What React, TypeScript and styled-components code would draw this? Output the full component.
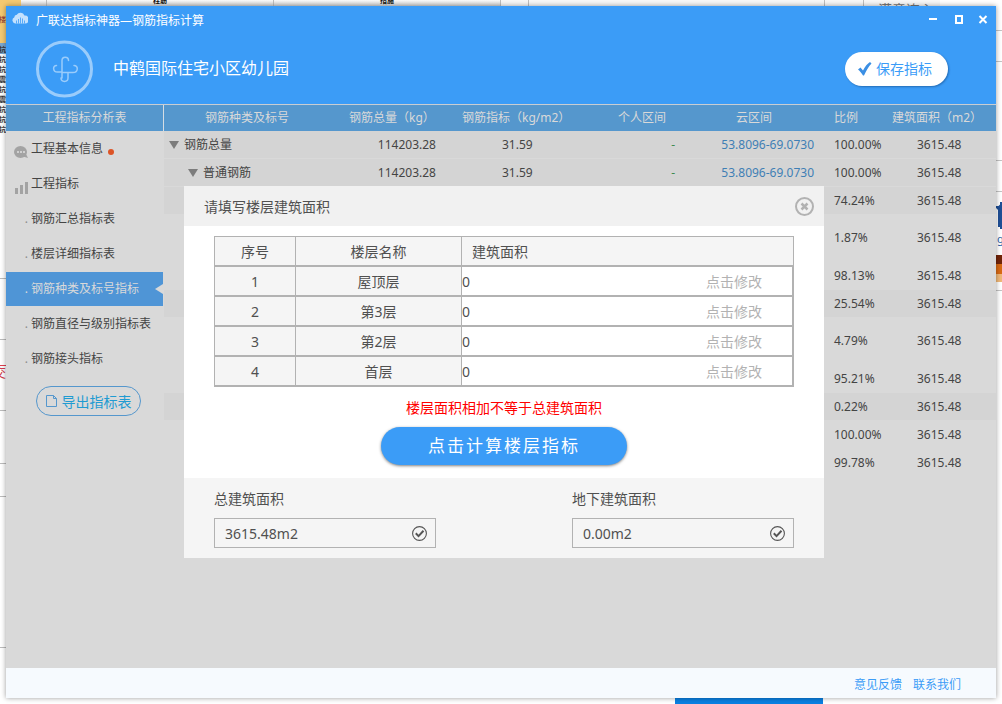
import React from 'react';
import styled, { createGlobalStyle } from 'styled-components';

const GlobalStyle = createGlobalStyle`
  *, *::before, *::after { box-sizing: border-box; }
  html, body { margin: 0; padding: 0; }
  body {
    font-family: "Noto Sans", "Noto Sans CJK SC", sans-serif;
    font-size: 12px;
    line-height: 18px;
    color: #444;
    background: #fff;
  }
  button, input { font: inherit; color: inherit; margin: 0; }
  button { border: 0; padding: 0; background: none; cursor: pointer; }
  a { text-decoration: none; color: inherit; }
`;

/* ---------- desktop behind the window ---------- */

const Desktop = styled.div`
  position: relative;
  min-height: 100vh;
  padding: 6px;
  display: flex;
  overflow: hidden;
`;

const Backdrop = styled.div`
  position: absolute;
  inset: 0;
  overflow: hidden;
`;

const LeftEdge = styled.svg`
  position: absolute;
  top: 0;
  left: 0;
`;

const RightEdge = styled.svg`
  position: absolute;
  top: 0;
  right: 0;
`;

const Taskbar = styled.div`
  position: absolute;
  bottom: 0;
  left: 675px;
  width: 148px;
  height: 6px;
  background: #0a80e2;
`;

/* ---------- window ---------- */

const Window = styled.main`
  position: relative;
  flex: 1;
  min-width: 0;
  display: flex;
  flex-direction: column;
  background: #d9d9d9;
  box-shadow: 0 0 5px rgba(0, 0, 0, 0.4);
`;

const Header = styled.header`
  height: 99px;
  background: #3b9cf7;
  border-bottom: 1px solid #c9cdd2;
  color: #fff;
`;

const TitleBar = styled.div`
  display: flex;
  align-items: center;
  height: 28px;
  padding: 0 7px 0 6px;
  gap: 8px;

  & > svg { margin-bottom: 4px; }
`;

const WindowTitle = styled.span`
  flex: 1;
  padding-top: 2px;
  font-size: 12px;
`;

const WindowButtons = styled.div`
  display: flex;
  gap: 13px;
  align-items: center;
`;

const WindowButton = styled.button`
  display: flex;
  width: 12px;
  height: 12px;
  color: #fff;
`;

const ProjectBar = styled.div`
  display: flex;
  align-items: center;
  height: 58px;
  margin-top: 6px;
  padding: 0 48px 0 30px;
`;

const ProjectName = styled.h1`
  flex: 1;
  margin: 0 0 2px 20px;
  font-size: 16px;
  font-weight: 400;
  line-height: 24px;
`;

const SaveButton = styled.button`
  display: flex;
  align-items: center;
  gap: 4px;
  width: 103px;
  height: 34px;
  padding-left: 13px;
  border-radius: 17px;
  background: #fff;
  color: #3b9cf7;
  font-size: 14px;
  box-shadow: 1px 1px 2px rgba(0, 40, 90, 0.4);
`;

const Content = styled.div`
  flex: 1;
  display: flex;
  align-items: stretch;
`;

const Sidebar = styled.nav`
  width: 158px;
  flex: none;
`;

const SidebarHeading = styled.h2`
  height: 26px;
  margin: 0;
  border-right: 1px solid #d5dde4;
  background: #5597cd;
  color: #d9d9d9;
  font-size: 12px;
  font-weight: 400;
  line-height: 26px;
  text-align: center;
`;

const NavList = styled.ul`
  list-style: none;
  margin: 0 1px 0 0;
  padding: 0;
`;

const NavItem = styled.li`
  margin-top: 1px;
`;

const NavLink = styled.a<{ $active?: boolean }>`
  position: relative;
  display: flex;
  align-items: center;
  height: 34px;
  color: ${(p) => (p.$active ? '#d9d9d9' : '#444')};
  background: ${(p) => (p.$active ? '#4f95d6' : 'transparent')};
`;

const NavMark = styled.span`
  display: flex;
  justify-content: flex-end;
  width: 22px;
  margin-right: 3px;
  color: #8d8d8d;
  ${NavLink}[aria-current] & { color: #d9d9d9; }

  svg { margin-top: 6px; }
`;

const AlertDot = styled.span`
  width: 6px;
  height: 6px;
  margin: 6px 0 0 5px;
  border-radius: 50%;
  background: #dc5427;
`;

const Notch = styled.span`
  position: absolute;
  right: 0;
  border: solid transparent;
  border-width: 5px 8px 5px 0;
  border-right-color: #d9d9d9;
`;

const ExportButton = styled.button`
  display: flex;
  align-items: center;
  justify-content: center;
  gap: 5px;
  width: 105px;
  height: 30px;
  margin: 10px 0 0 30px;
  padding-top: 1px;
  border: 1px solid #5597cd;
  border-radius: 15px;
  color: #1f9bd2;
  font-size: 14px;

  svg { margin-bottom: 2px; }
`;

const Main = styled.section`
  flex: 1;
  min-width: 0;
`;

const IndexTable = styled.table`
  width: 100%;
  table-layout: fixed;
  border-collapse: separate;
  border-spacing: 0;
`;

const HeadCell = styled.th<{ $indent: number }>`
  height: 26px;
  padding: 0 0 0 ${(p) => p.$indent}px;
  background: #5597cd;
  color: #d9d9d9;
  font-weight: 400;
  text-align: left;
  white-space: nowrap;
`;

const Row = styled.tr<{ $tall?: boolean; $shaded?: boolean }>`
  height: ${(p) => (p.$tall ? 47 : 28)}px;
  background: ${(p) => (p.$shaded ? '#d4d4d4' : 'transparent')};
`;

const Cell = styled.td<{ $indent?: number; $right?: number; $color?: string }>`
  padding: 0 ${(p) => p.$right ?? 0}px 0 ${(p) => p.$indent ?? 0}px;
  border-bottom: 1px solid #d9d9d9;
  color: ${(p) => p.$color ?? '#444'};
  text-align: ${(p) => (p.$right === undefined ? 'left' : 'right')};
  white-space: nowrap;
`;

const RowToggle = styled.button`
  width: 0;
  height: 0;
  margin-right: 5px;
  border: solid transparent;
  border-width: 8px 5px 0;
  border-top-color: #7c7c7c;
`;

const Footer = styled.footer`
  display: flex;
  justify-content: flex-end;
  align-items: center;
  gap: 11px;
  height: 30px;
  padding: 4px 35px 0 0;
  background: #f6fafe;
  color: #3b9cf7;
`;

/* ---------- dialog ---------- */

const Overlay = styled.div`
  position: absolute;
  inset: 0;
  padding: 180px 172px 0 178px;
`;

const Dialog = styled.section`
  color: #505050;
  background: #fff;
  font-size: 14px;
  line-height: 20px;
`;

const DialogHeader = styled.header`
  display: flex;
  align-items: center;
  justify-content: space-between;
  height: 40px;
  padding: 0 10px 0 20px;
  background: #f1f1f1;
`;

const DialogTitle = styled.h2`
  margin: 0;
  padding-top: 2px;
  font-size: 14px;
  font-weight: 400;
`;

const CloseButton = styled.button`
  display: flex;
`;

const DialogBody = styled.div`
  display: flex;
  flex-direction: column;
  align-items: center;
  padding: 10px 30px 13px;
`;

const FloorTable = styled.table`
  width: 100%;
  table-layout: fixed;
  border-collapse: separate;
  border-spacing: 0;
  border: solid #b2b2b2;
  border-width: 1px 1px 0;
`;

const FloorHead = styled.th<{ $start?: boolean }>`
  height: 30px;
  padding: ${(p) => (p.$start ? '2px 10px 0' : '2px 0 0')};
  border-bottom: 2px solid #b2b2b2;
  background: #f5f5f5;
  font-weight: 400;
  text-align: ${(p) => (p.$start ? 'left' : 'center')};
  & + & { border-left: 1px solid #b2b2b2; }
`;

const FloorCell = styled.td`
  height: 30px;
  padding: 2px 0 0;
  border-bottom: 2px solid #b2b2b2;
  background: #f5f5f5;
  text-align: center;
  & + & { border-left: 1px solid #b2b2b2; }
`;

const AreaCell = styled(FloorCell)`
  padding: 0;
  background: #fff;
  border-right: 1px solid #b2b2b2;
`;

const AreaEditor = styled.div`
  display: flex;
  align-items: center;
  padding-right: 30px;
`;

const AreaInput = styled.input`
  flex: 1;
  min-width: 0;
  height: 28px;
  padding: 0;
  border: 0;
  background: transparent;
  outline: none;
`;

const EditButton = styled.button`
  padding-top: 2px;
  color: #b2b2b2;
`;

const ErrorText = styled.p`
  margin: 11px 0 9px;
  color: #f00;
`;

const CalculateButton = styled.button`
  width: 246px;
  height: 38px;
  border-radius: 19px;
  background: #3b9cf7;
  color: #fff;
  font-size: 17px;
  letter-spacing: 2px;
  box-shadow: 0 1px 3px rgba(0, 0, 0, 0.5);
`;

const DialogFooter = styled.footer`
  display: flex;
  justify-content: space-between;
  height: 80px;
  padding: 11px 30px 0;
  background: #f5f5f5;
`;

const Field = styled.label`
  display: flex;
  flex-direction: column;
  gap: 9px;
  width: 222px;
`;

const FieldBox = styled.span`
  display: flex;
  align-items: center;
  height: 30px;
  padding: 0 8px 0 10px;
  border: 1px solid #b2b2b2;
`;

const FieldInput = styled.input`
  flex: 1;
  min-width: 0;
  padding: 2px 0 0;
  border: 0;
  background: transparent;
  outline: none;
`;

/* ---------- icons ---------- */

const CloudLogo = () => (
  <svg width="16" height="12" viewBox="0 0 16 12" aria-hidden="true">
    <path d="M3 11.500A3.200 3.200 0 0 1 2.200 5.500 3 3 0 0 1 4.800 2.800a4.200 4.200 0 0 1 7.600.8A3.800 3.800 0 0 1 13 11.500z" fill="#c4e1fd" />
    <path d="M4.500 8.500v3M6.500 7v4.500M8.500 5.500v6M10.500 6.500v5M12.500 8.500v3" stroke="#3b9cf7" strokeWidth=".8" />
  </svg>
);

const ProjectEmblem = () => (
  <svg width="57" height="58" viewBox="0 0 57 58" fill="none" aria-hidden="true">
    <circle cx="28.5" cy="29" r="27" stroke="#9accfb" strokeWidth="3" />
    <path
      d="M32.500 20.500C32.500 16 26 16 26 20.500V32H21.500C16.500 32 16.500 25.500 20.500 25.500M25 38C25 42.500 32 42.500 32 38V32.500H37C42.500 32.500 42.500 25.500 38 25.500M26 32.500H32M26 32V38"
      stroke="#9accfb"
      strokeWidth="1.500"
      strokeLinecap="round"
    />
  </svg>
);

const CheckMark = () => (
  <svg width="14" height="14" viewBox="0 0 14 14" aria-hidden="true">
    <path d="M0 7.500 2.500 5.500 5 8.500C7 4.500 9.500 1.500 12 0l1.500 1.500C10.500 4.500 8 9 6 13.500H5C3.500 11 2 9 0 7.500z" fill="#3b8fe4" />
  </svg>
);

const ChatIcon = () => (
  <svg width="14" height="12" viewBox="0 0 14 12" aria-hidden="true">
    <ellipse cx="6.500" cy="6" rx="6.500" ry="6" fill="#a3a3a3" />
    <path d="M9 10.500l5 1.500-2-4z" fill="#a3a3a3" />
    <path d="M3 5h2v2H3zM6 5h2v2H6zM9 5h2v2H9z" fill="#d0d0d0" />
  </svg>
);

const BarsIcon = () => (
  <svg width="13" height="13" viewBox="0 0 13 13" aria-hidden="true">
    <path d="M0 7h3v6H0zM5 4h3v9H5zM10 1h3v12h-3z" fill="#a3a3a3" />
  </svg>
);

const PageIcon = () => (
  <svg width="11" height="12" viewBox="0 0 11 12" fill="none" stroke="#5597cd" aria-hidden="true">
    <path d="M.5.5h7l3 3v8H.5zM7.500.5v3h3" />
  </svg>
);

const CloseIcon = () => (
  <svg width="19" height="19" viewBox="0 0 19 19" fill="none" stroke="#b2b2b2" strokeWidth="2" aria-hidden="true">
    <circle cx="9.500" cy="9.500" r="8.500" />
    <path d="M6.500 6.500l6 6M12.500 6.500l-6 6" strokeWidth="2.500" />
  </svg>
);

const ConfirmIcon = () => (
  <svg width="15" height="15" viewBox="0 0 15 15" fill="none" stroke="#555" aria-hidden="true">
    <circle cx="7.500" cy="7.500" r="6.900" strokeWidth="1.100" />
    <path d="M3.800 7.300l2.700 2.800 5-5.400" strokeWidth="2" />
  </svg>
);

/* ---------- data ---------- */

const columns = [
  { label: '钢筋种类及标号', width: 176, indent: 41 },
  { label: '钢筋总量（kg）', width: 114, indent: 9 },
  { label: '钢筋指标（kg/m2）', width: 146, indent: 8 },
  { label: '个人区间', width: 100, indent: 18 },
  { label: '云区间', width: 124, indent: 36 },
  { label: '比例', width: 58, indent: 10 },
  { label: '建筑面积（m2）', indent: 10 },
];

const rows = [
  { name: '钢筋总量', level: 0, total: '114203.28', index: '31.59', personal: '-', cloud: '53.8096-69.0730', ratio: '100.00%', shaded: true },
  { name: '普通钢筋', level: 1, total: '114203.28', index: '31.59', personal: '-', cloud: '53.8096-69.0730', ratio: '100.00%', shaded: true },
  { ratio: '74.24%', shaded: true },
  { ratio: '1.87%', tall: true },
  { ratio: '98.13%' },
  { ratio: '25.54%', shaded: true },
  { ratio: '4.79%', tall: true },
  { ratio: '95.21%' },
  { ratio: '0.22%', shaded: true },
  { ratio: '100.00%' },
  { ratio: '99.78%' },
];

const navItems = [
  { label: '工程基本信息', icon: <ChatIcon />, alert: true },
  { label: '工程指标', icon: <BarsIcon /> },
  { label: '钢筋汇总指标表' },
  { label: '楼层详细指标表' },
  { label: '钢筋种类及标号指标', active: true },
  { label: '钢筋直径与级别指标表' },
  { label: '钢筋接头指标' },
];

const floors = ['屋顶层', '第3层', '第2层', '首层'];
const sheetMarks = ['抗', '抗', '抗', '震', '抗', '震', '抗', '抗', '抗'];

const DesktopBackdrop = () => (
  <Backdrop aria-hidden="true">
    <LeftEdge width="940" height="704">
      <defs>
        <linearGradient id="toolbar" x1="0" x2="0" y1="0" y2="1">
          <stop offset="0" stopColor="#fafafa" />
          <stop offset="1" stopColor="#d2d2d2" />
        </linearGradient>
      </defs>
      <rect x="21" width="480" height="6" fill="url(#toolbar)" />
      <rect x="501" width="439" height="6" fill="#f7f7f7" />
      <rect width="21" height="43" fill="#f5c970" />
      <path d="M46.500 0v6M273.500 0v6M500.500 0v6M528.500 0v6M824.500 0v6M863.500 0v6" stroke="#bdbdbd" />
      <rect y="43" width="6" height="11" fill="#7ba7cf" />
      <text x="-1" y="22" fontSize="7" fill="#8a2d2d">楼</text>
      {sheetMarks.map((mark, i) => (
        <text key={i} x="-1" y={52 + i * 10} fontSize="7" fontWeight="700" fill="#333">{mark}</text>
      ))}
      <text x="153" y="3" fontSize="7" fontWeight="700" fill="#111">柱筋</text>
      <text x="380" y="3" fontSize="7" fontWeight="700" fill="#111">措施</text>
      <text x="878" y="15" fontSize="14" fill="#777">满意连心</text>
      <path d="M0 278.500h6M0 339.500h6M0 410.500h6M0 463.500h6M0 496.500h6M0 647.500h6" stroke="#bbb" />
      <path d="M0 365.500h6" stroke="#e04050" />
      <text x="-7" y="377" fontSize="13" fill="#d23b4b">交</text>
    </LeftEdge>
    <RightEdge width="6" height="704">
      <path d="M0 30.500h6M0 61.500h6M0 160.500h6M0 191.500h6M0 290.500h6" stroke="#c4c4c4" />
      <path d="M0 207h6M1 209l2-2v20M5 202v27" fill="none" stroke="#1f4f96" strokeWidth="2" />
      <text x="1" y="243" fontSize="11" fill="#2f62a8">g</text>
      <rect y="255" width="6" height="9" fill="#722408" />
      <rect y="264" width="6" height="10" fill="#d96a14" />
      <rect y="274" width="6" height="8" fill="#f0b878" />
    </RightEdge>
    <Taskbar />
  </Backdrop>
);

export default function App() {
  return (
    <Desktop>
      <GlobalStyle />
      <DesktopBackdrop />
      <Window>
        <Header>
          <TitleBar>
            <CloudLogo />
            <WindowTitle>广联达指标神器—钢筋指标计算</WindowTitle>
            <WindowButtons>
              <WindowButton type="button" aria-label="最小化">
                <svg width="12" height="12"><path d="M2 4h8v2H2z" fill="currentColor" /></svg>
              </WindowButton>
              <WindowButton type="button" aria-label="最大化">
                <svg width="12" height="12"><path d="M4 2h6v7H4z" fill="none" stroke="currentColor" strokeWidth="2" /></svg>
              </WindowButton>
              <WindowButton type="button" aria-label="关闭窗口">
                <svg width="12" height="12"><path d="M2.500 2l7 7M9.500 2l-7 7" stroke="currentColor" strokeWidth="2" /></svg>
              </WindowButton>
            </WindowButtons>
          </TitleBar>
          <ProjectBar>
            <ProjectEmblem />
            <ProjectName>中鹤国际住宅小区幼儿园</ProjectName>
            <SaveButton type="button"><CheckMark />保存指标</SaveButton>
          </ProjectBar>
        </Header>

        <Content>
          <Sidebar>
            <SidebarHeading>工程指标分析表</SidebarHeading>
            <NavList>
              {navItems.map((item) => (
                <NavItem key={item.label}>
                  <NavLink href="#" $active={item.active} aria-current={item.active ? 'page' : undefined}>
                    <NavMark>{item.icon ?? '.'}</NavMark>
                    {item.label}
                    {item.alert && <AlertDot />}
                    {item.active && <Notch />}
                  </NavLink>
                </NavItem>
              ))}
            </NavList>
            <ExportButton type="button"><PageIcon />导出指标表</ExportButton>
          </Sidebar>

          <Main>
            <IndexTable>
              <colgroup>
                {columns.map((c) => <col key={c.label} width={c.width} />)}
              </colgroup>
              <thead>
                <tr>
                  {columns.map((c) => <HeadCell key={c.label} $indent={c.indent}>{c.label}</HeadCell>)}
                </tr>
              </thead>
              <tbody>
                {rows.map((row, i) => (
                  <Row key={i} $tall={row.tall} $shaded={row.shaded}>
                    <Cell $indent={5 + (row.level ?? 0) * 19}>
                      {row.name && <RowToggle type="button" aria-label="折叠" />}
                      {row.name}
                    </Cell>
                    <Cell $right={18}>{row.total}</Cell>
                    <Cell $indent={48}>{row.index}</Cell>
                    <Cell $right={25} $color="#3f8a50">{row.personal}</Cell>
                    <Cell $right={10} $color="#3f7fb5">{row.cloud}</Cell>
                    <Cell $indent={10}>{row.ratio}</Cell>
                    <Cell $indent={35}>3615.48</Cell>
                  </Row>
                ))}
              </tbody>
            </IndexTable>
          </Main>
        </Content>

        <Footer>
          <a href="#">意见反馈</a>
          <a href="#">联系我们</a>
        </Footer>

        <Overlay>
          <Dialog role="dialog" aria-labelledby="dialog-title">
            <DialogHeader>
              <DialogTitle id="dialog-title">请填写楼层建筑面积</DialogTitle>
              <CloseButton type="button" aria-label="关闭"><CloseIcon /></CloseButton>
            </DialogHeader>
            <DialogBody>
              <FloorTable>
                <colgroup>
                  <col width={80} />
                  <col width={166} />
                  <col />
                </colgroup>
                <thead>
                  <tr>
                    <FloorHead>序号</FloorHead>
                    <FloorHead>楼层名称</FloorHead>
                    <FloorHead $start>建筑面积</FloorHead>
                  </tr>
                </thead>
                <tbody>
                  {floors.map((floor, i) => (
                    <tr key={floor}>
                      <FloorCell>{i + 1}</FloorCell>
                      <FloorCell>{floor}</FloorCell>
                      <AreaCell>
                        <AreaEditor>
                          <AreaInput defaultValue="0" aria-label={`${floor}建筑面积`} />
                          <EditButton type="button">点击修改</EditButton>
                        </AreaEditor>
                      </AreaCell>
                    </tr>
                  ))}
                </tbody>
              </FloorTable>
              <ErrorText role="alert">楼层面积相加不等于总建筑面积</ErrorText>
              <CalculateButton type="button">点击计算楼层指标</CalculateButton>
            </DialogBody>
            <DialogFooter>
              <Field>
                总建筑面积
                <FieldBox><FieldInput defaultValue="3615.48m2" /><ConfirmIcon /></FieldBox>
              </Field>
              <Field>
                地下建筑面积
                <FieldBox><FieldInput defaultValue="0.00m2" /><ConfirmIcon /></FieldBox>
              </Field>
            </DialogFooter>
          </Dialog>
        </Overlay>
      </Window>
    </Desktop>
  );
}
